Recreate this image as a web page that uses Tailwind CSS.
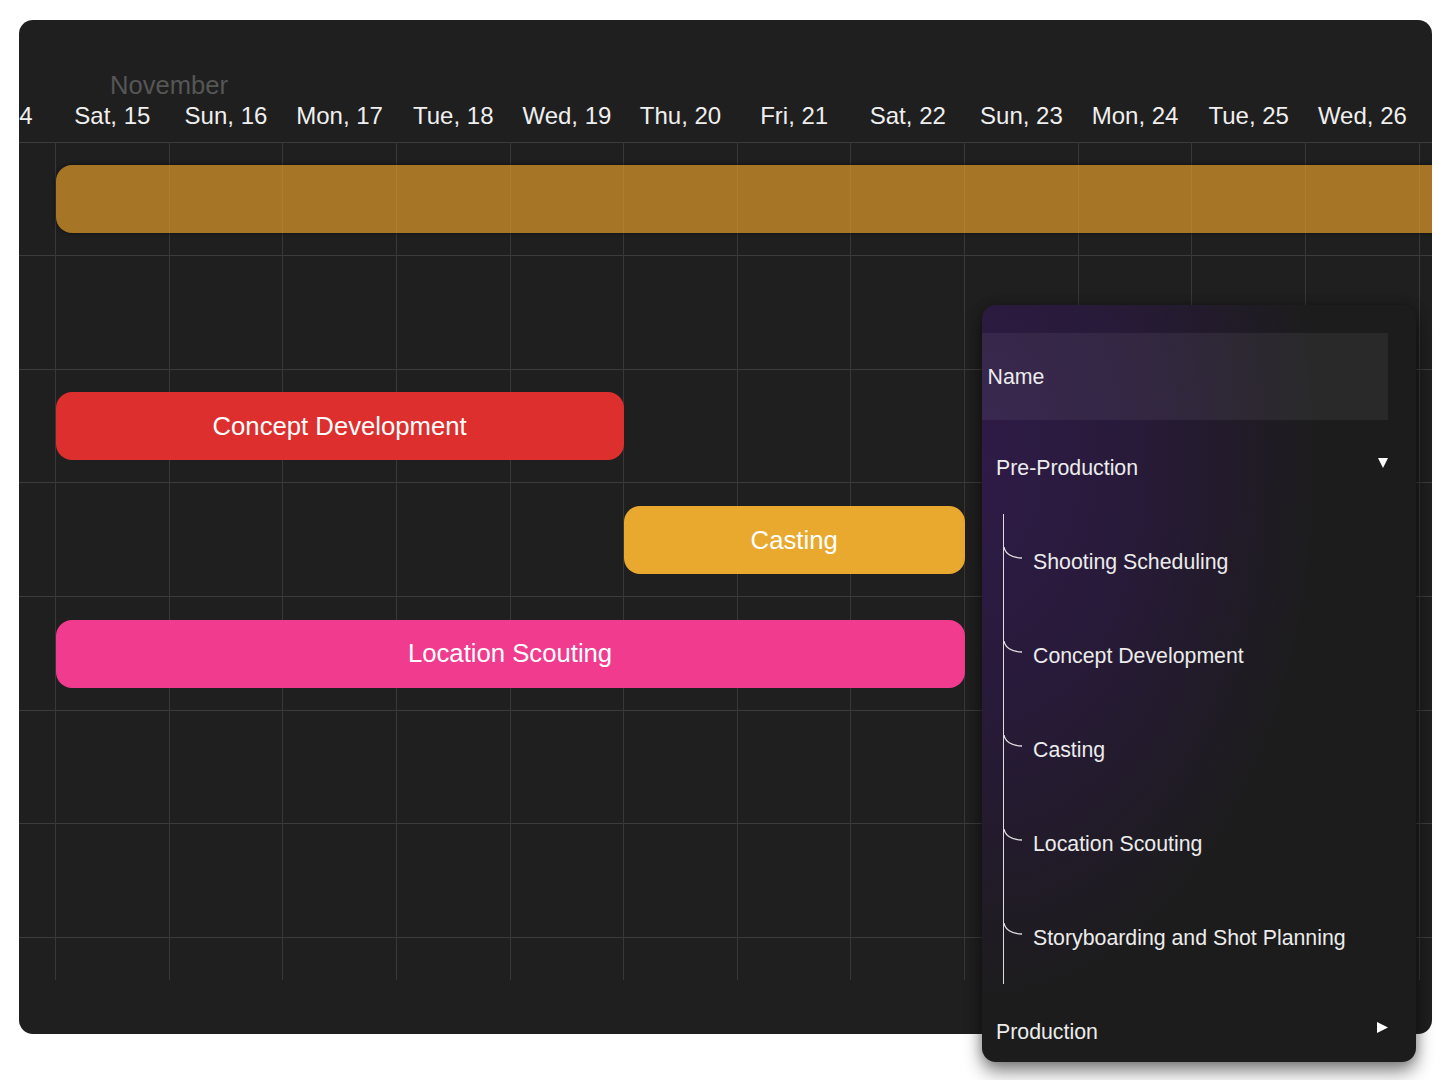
<!DOCTYPE html>
<html lang="en">

<head>
  <meta charset="UTF-8" />
  <meta name="viewport" content="width=device-width, initial-scale=1.0" />
  <title>Gantt Chart</title>
  <script src="https://cdn.jsdelivr.net/npm/@tailwindcss/browser@4"></script>
</head>

<body class="bg-white font-['Liberation_Sans',Arial,sans-serif]">
  <div class="relative w-[1450px] h-[1080px] pt-5 pl-[19px]">
    <!-- chart card -->
    <div class="relative w-[1413px] h-[1014px] rounded-[14px] overflow-hidden bg-[#1f1f1f]">
      <!-- grid lines -->
      <div class="absolute left-0 right-0 top-[121.5px] h-[838px] overflow-hidden">
        <div class="h-[113.65px] border-t-[1.5px] border-[#3c3c3c]"></div>
        <div class="h-[113.65px] border-t-[1.5px] border-[#3c3c3c]"></div>
        <div class="h-[113.65px] border-t-[1.5px] border-[#3c3c3c]"></div>
        <div class="h-[113.65px] border-t-[1.5px] border-[#3c3c3c]"></div>
        <div class="h-[113.65px] border-t-[1.5px] border-[#3c3c3c]"></div>
        <div class="h-[113.65px] border-t-[1.5px] border-[#3c3c3c]"></div>
        <div class="h-[113.65px] border-t-[1.5px] border-[#3c3c3c]"></div>
        <div class="h-[113.65px] border-t-[1.5px] border-[#3c3c3c]"></div>
      </div>
      <div class="absolute left-[36px] top-[122px] h-[838px] flex">
        <div class="w-[113.65px] border-l-[1.5px] border-[#383838]"></div>
        <div class="w-[113.65px] border-l-[1.5px] border-[#383838]"></div>
        <div class="w-[113.65px] border-l-[1.5px] border-[#383838]"></div>
        <div class="w-[113.65px] border-l-[1.5px] border-[#383838]"></div>
        <div class="w-[113.65px] border-l-[1.5px] border-[#383838]"></div>
        <div class="w-[113.65px] border-l-[1.5px] border-[#383838]"></div>
        <div class="w-[113.65px] border-l-[1.5px] border-[#383838]"></div>
        <div class="w-[113.65px] border-l-[1.5px] border-[#383838]"></div>
        <div class="w-[113.65px] border-l-[1.5px] border-[#383838]"></div>
        <div class="w-[113.65px] border-l-[1.5px] border-[#383838]"></div>
        <div class="w-[113.65px] border-l-[1.5px] border-[#383838]"></div>
        <div class="w-[113.65px] border-l-[1.5px] border-[#383838]"></div>
        <div class="w-[113.65px] border-l-[1.5px] border-[#383838]"></div>
      </div>

      <!-- header -->
      <div class="relative h-[122px] pt-[50px]">
        <div class="h-[30px] pl-[91px] text-[25.6px] leading-[30px] text-[#565656]">November</div>
        <div class="flex ml-[-77.15px] mt-[1px] text-[24px] leading-[30px] text-[#efefef] text-center">
          <div class="w-[113.65px] shrink-0">Fri, 14</div>
          <div class="w-[113.65px] shrink-0">Sat, 15</div>
          <div class="w-[113.65px] shrink-0">Sun, 16</div>
          <div class="w-[113.65px] shrink-0">Mon, 17</div>
          <div class="w-[113.65px] shrink-0">Tue, 18</div>
          <div class="w-[113.65px] shrink-0">Wed, 19</div>
          <div class="w-[113.65px] shrink-0">Thu, 20</div>
          <div class="w-[113.65px] shrink-0">Fri, 21</div>
          <div class="w-[113.65px] shrink-0">Sat, 22</div>
          <div class="w-[113.65px] shrink-0">Sun, 23</div>
          <div class="w-[113.65px] shrink-0">Mon, 24</div>
          <div class="w-[113.65px] shrink-0">Tue, 25</div>
          <div class="w-[113.65px] shrink-0">Wed, 26</div>
        </div>
      </div>

      <!-- bars -->
      <div class="relative pl-[36.5px] pt-[0.4px] text-[25.7px] text-white">
        <div class="grid grid-cols-[repeat(13,113.65px)] h-[113.65px] items-center">
          <div class="col-span-13 w-[1500px] h-[68px] rounded-[16px] bg-[#e69e28]/68 shadow-[0_0_4px_rgba(0,0,0,0.6)]"></div>
        </div>
        <div class="h-[113.65px]"></div>
        <div class="grid grid-cols-[repeat(13,113.65px)] h-[113.65px] items-center">
          <div class="col-span-5 h-[68px] rounded-[16px] bg-[#de2f2f] flex items-center justify-center">Concept Development</div>
        </div>
        <div class="grid grid-cols-[repeat(13,113.65px)] h-[113.65px] items-center">
          <div class="col-start-6 col-span-3 h-[68px] rounded-[16px] bg-[#e9a92e] flex items-center justify-center">Casting</div>
        </div>
        <div class="grid grid-cols-[repeat(13,113.65px)] h-[113.65px] items-center">
          <div class="col-span-8 h-[68px] rounded-[16px] bg-[#f03b8e] flex items-center justify-center">Location Scouting</div>
        </div>
      </div>
    </div>

    <!-- task panel -->
    <div class="absolute left-[982px] top-[305px] w-[434px] h-[757px] rounded-[14px] overflow-hidden pt-7 text-[21.3px] text-[#ececec] bg-[#1c1c1c] bg-[radial-gradient(ellipse_340px_540px_at_0px_160px,#2e1b47_0%,#281a39_45%,rgba(28,28,28,0)_100%)] shadow-[0_10px_18px_rgba(0,0,0,0.45),0_0_12px_rgba(0,0,0,0.25)]">
      <div class="w-[406px] h-[87px] pl-[5.5px] pt-[2px] flex items-center bg-white/6">Name</div>

      <div class="h-[94px] pl-[14px] pr-[28px] pt-[4px] flex items-center justify-between">
        <span>Pre-Production</span>
        <svg class="w-[10px] h-[10px] mb-[12px]" viewBox="0 0 10 10"><polygon points="0,0 10,0 5,10" fill="#ffffff" /></svg>
      </div>

      <div class="ml-[21px] h-[470px] border-l-[1.5px] border-[#dddddd]">
        <div class="h-[94px] pt-[4px] flex items-center">
          <svg class="w-[18px] h-[12px] mb-[21px] shrink-0" viewBox="0 0 18 12" fill="none"><path d="M0 0 C1 6 7 11 18 11" stroke="#dddddd" stroke-width="1.3" /></svg>
          <span class="ml-[11px]">Shooting Scheduling</span>
        </div>
        <div class="h-[94px] pt-[4px] flex items-center">
          <svg class="w-[18px] h-[12px] mb-[21px] shrink-0" viewBox="0 0 18 12" fill="none"><path d="M0 0 C1 6 7 11 18 11" stroke="#dddddd" stroke-width="1.3" /></svg>
          <span class="ml-[11px]">Concept Development</span>
        </div>
        <div class="h-[94px] pt-[4px] flex items-center">
          <svg class="w-[18px] h-[12px] mb-[21px] shrink-0" viewBox="0 0 18 12" fill="none"><path d="M0 0 C1 6 7 11 18 11" stroke="#dddddd" stroke-width="1.3" /></svg>
          <span class="ml-[11px]">Casting</span>
        </div>
        <div class="h-[94px] pt-[4px] flex items-center">
          <svg class="w-[18px] h-[12px] mb-[21px] shrink-0" viewBox="0 0 18 12" fill="none"><path d="M0 0 C1 6 7 11 18 11" stroke="#dddddd" stroke-width="1.3" /></svg>
          <span class="ml-[11px]">Location Scouting</span>
        </div>
        <div class="h-[94px] pt-[4px] flex items-center">
          <svg class="w-[18px] h-[12px] mb-[21px] shrink-0" viewBox="0 0 18 12" fill="none"><path d="M0 0 C1 6 7 11 18 11" stroke="#dddddd" stroke-width="1.3" /></svg>
          <span class="ml-[11px]">Storyboarding and Shot Planning</span>
        </div>
      </div>

      <div class="h-[94px] pl-[14px] pr-[28px] pt-[4px] flex items-center justify-between">
        <span>Production</span>
        <svg class="w-[11px] h-[11px] mb-[12px]" viewBox="0 0 11 11"><polygon points="0,0 11,5.5 0,11" fill="#ffffff" /></svg>
      </div>
    </div>
  </div>
</body>

</html>
